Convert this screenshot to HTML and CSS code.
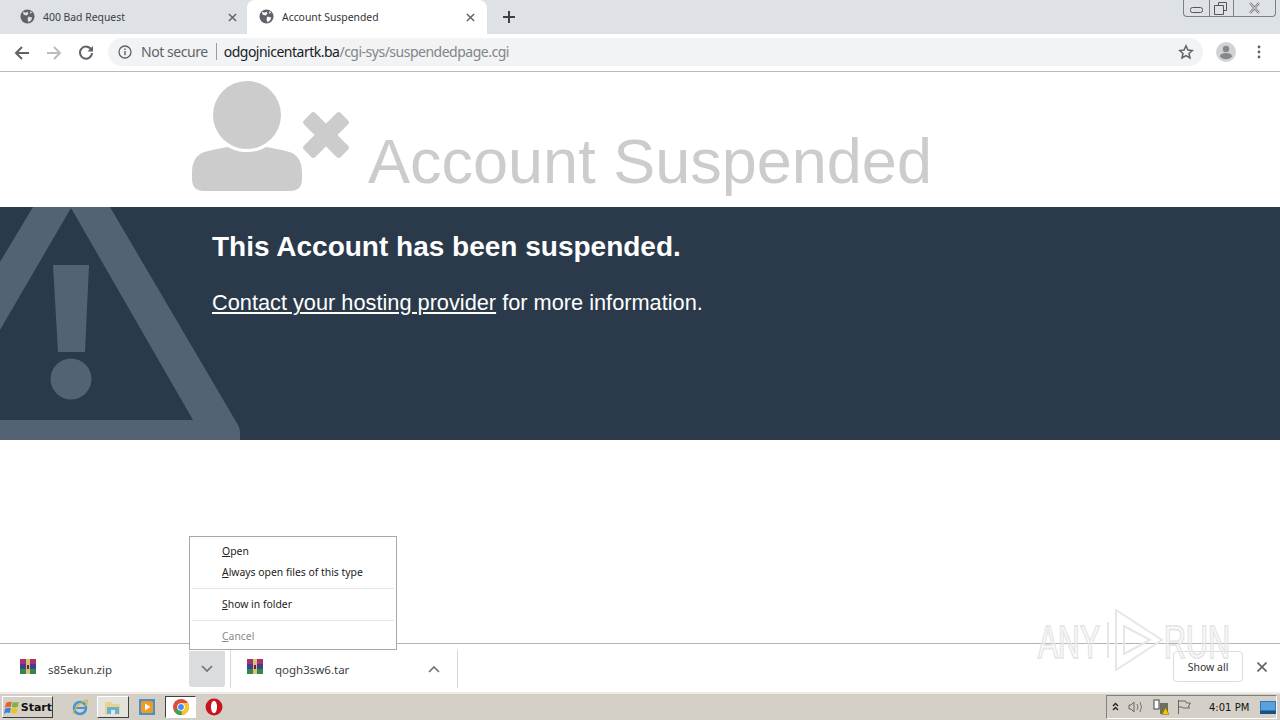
FILE: index.html
```html
<!DOCTYPE html>
<html lang="en">

<head>
    <meta charset="UTF-8">
    <title>Account Suspended</title>
    <link rel="stylesheet" href="styles.css">
</head>

<body>
    <div class="screen">
        <div class="tab-bar">
            <div class="tab">
                <svg class="globe" viewBox="0 0 16 16"><circle cx="8" cy="8" r="7.5" fill="#5f6368"/><path d="M3 3l3 1 2-1 1 2-2 2-3-1zM9 8l4 1-1 3-3 2-1-3zM11 2l2 2-2 1z" fill="#dee1e6"/></svg>
                <span class="tab-title">400 Bad Request</span>
                <svg class="tab-close" viewBox="0 0 10 10"><path d="M1 1l8 8M9 1l-8 8" stroke="#5f6368" stroke-width="1.6"/></svg>
            </div>
            <div class="tab tab-active">
                <svg class="globe" viewBox="0 0 16 16"><circle cx="8" cy="8" r="7.5" fill="#5f6368"/><path d="M3 3l3 1 2-1 1 2-2 2-3-1zM9 8l4 1-1 3-3 2-1-3zM11 2l2 2-2 1z" fill="#fff"/></svg>
                <span class="tab-title">Account Suspended</span>
                <svg class="tab-close" viewBox="0 0 10 10"><path d="M1 1l8 8M9 1l-8 8" stroke="#5f6368" stroke-width="1.6"/></svg>
            </div>
            <svg class="new-tab" viewBox="0 0 12 12"><path d="M6 0v12M0 6h12" stroke="#3c4043" stroke-width="2"/></svg>
            <div class="win-buttons">
                <div class="win-btn win-min"><svg width="13" height="6" viewBox="0 0 13 6"><rect x="0.5" y="0.5" width="12" height="5" rx="2" fill="none" stroke="#555"/></svg></div>
                <div class="win-btn win-max"><svg width="13" height="13" viewBox="0 0 13 13"><path d="M4.5 3V.5h8v8H10M.5 3.500h9v9h-9z" fill="none" stroke="#555"/></svg></div>
                <div class="win-btn win-x"><svg width="13" height="12" viewBox="0 0 13 12"><path d="M2 1l9 10M11 1L2 11" stroke="#777" stroke-width="2.4"/><path d="M2 1l9 10M11 1L2 11" stroke="#dee1e6" stroke-width="1"/></svg></div>
            </div>
        </div>

        <div class="toolbar">
            <svg class="nav-icon" viewBox="0 0 16 16"><path d="M15 8H2M8 2L2 8l6 6" fill="none" stroke="#5f6368" stroke-width="2"/></svg>
            <svg class="nav-icon" viewBox="0 0 16 16"><path d="M1 8h13M8 2l6 6-6 6" fill="none" stroke="#babcbe" stroke-width="2"/></svg>
            <svg class="nav-icon" viewBox="0 0 16 16"><path d="M13.500 5.200A6 6 0 1 0 14 8" fill="none" stroke="#5f6368" stroke-width="2"/><path d="M9.500 6.500H15V1z" fill="#5f6368"/></svg>
            <div class="omnibox">
                <svg class="info-icon" viewBox="0 0 14 14"><circle cx="7" cy="7" r="6" fill="none" stroke="#5f6368" stroke-width="1.3"/><path d="M7 6v4.200M7 3.400v1.500" stroke="#5f6368" stroke-width="1.4"/></svg>
                <span class="not-secure">Not secure</span>
                <span class="omni-sep"></span>
                <span class="url"><span class="url-host">odgojnicentartk.ba</span>/cgi-sys/suspendedpage.cgi</span>
                <svg class="star" viewBox="0 0 16 16"><path d="M8 1.800l1.900 4.200 4.500.5-3.400 3 1 4.500L8 11.600 4 14l1-4.500-3.400-3 4.500-.5z" fill="none" stroke="#5f6368" stroke-width="1.5"/></svg>
            </div>
            <svg class="avatar" viewBox="0 0 20 20"><circle cx="10" cy="10" r="10" fill="#d0d2d4"/><circle cx="10" cy="7" r="3.200" fill="#85888b"/><path d="M3.800 14.200c1-2.600 3.600-3.200 6.200-3.200s5.200.6 6.200 3.200c-1.500 2-3.700 3-6.200 3s-4.700-1-6.200-3z" fill="#85888b"/></svg>
            <svg class="menu-dots" viewBox="0 0 4 14"><circle cx="2" cy="2" r="1.400" fill="#5f6368"/><circle cx="2" cy="7" r="1.400" fill="#5f6368"/><circle cx="2" cy="12" r="1.400" fill="#5f6368"/></svg>
        </div>

        <div class="page">
            <div class="page-head">
                <svg class="user-x" viewBox="0 0 158 110">
                    <circle cx="55" cy="34" r="34" fill="#ccc"/>
                    <path d="M0 92c0-14 6-20 16-22 8-2 14-3 20-4 5 3 11 5 19 5s14-2 19-5c6 1 12 2 20 4 10 2 16 8 16 22v6c0 8-4 12-12 12H12c-8 0-12-4-12-12z" fill="#ccc"/>
                    <rect x="108" y="46" width="52" height="16" rx="3" fill="#ccc" transform="rotate(45 134 54)"/>
                    <rect x="108" y="46" width="52" height="16" rx="3" fill="#ccc" transform="rotate(-45 134 54)"/>
                </svg>
                <h1 class="suspended-title">Account Suspended</h1>
            </div>
            <div class="banner">
                <svg class="banner-warning" viewBox="0 0 240 233">
                    <path d="M33 0L0 55v68L71 1 193 213H0v20h240v-8q0-4-2-7L110 0z" fill="#546374"/>
                    <path d="M53 58h36l-4 87H58z" fill="#546374"/>
                    <circle cx="71" cy="172" r="20.500" fill="#546374"/>
                </svg>
                <div class="banner-text">
                    <h2>This Account has been suspended.</h2>
                    <p><a href="#">Contact your hosting provider</a> for more information.</p>
                </div>
            </div>
        </div>

        <div class="download-bar">
            <div class="download-item">
                <svg class="rar-icon" viewBox="0 0 16 16"><rect x="0" y="0" width="16" height="5" fill="#a8326a"/><rect x="0" y="5" width="16" height="5" fill="#3f3f96"/><rect x="0" y="10" width="16" height="5" fill="#2f8a4a"/><rect x="6" y="0" width="4" height="15" fill="#d8c27a"/><rect x="7" y="6" width="2" height="4" fill="#7a2020"/></svg>
                <span class="file-name">s85ekun.zip</span>
                <span class="chevron-box chevron-open"><svg width="12" height="8" viewBox="0 0 12 8"><path d="M1 1l5 5 5-5" fill="none" stroke="#70757a" stroke-width="1.700"/></svg></span>
            </div>
            <span class="download-sep"></span>
            <div class="download-item download-item-second">
                <svg class="rar-icon" viewBox="0 0 16 16"><rect x="0" y="0" width="16" height="5" fill="#a8326a"/><rect x="0" y="5" width="16" height="5" fill="#3f3f96"/><rect x="0" y="10" width="16" height="5" fill="#2f8a4a"/><rect x="6" y="0" width="4" height="15" fill="#d8c27a"/><rect x="7" y="6" width="2" height="4" fill="#7a2020"/></svg>
                <span class="file-name">qogh3sw6.tar</span>
                <span class="chevron-box"><svg width="12" height="8" viewBox="0 0 12 8"><path d="M1 7l5-5 5 5" fill="none" stroke="#70757a" stroke-width="1.700"/></svg></span>
            </div>
            <span class="download-sep"></span>
            <button class="show-all">Show all</button>
            <svg class="bar-close" viewBox="0 0 10 10"><path d="M.5.5l9 9M9.500.5l-9 9" stroke="#5f6368" stroke-width="1.600"/></svg>
        </div>

        <div class="taskbar">
            <div class="start-btn">
                <svg width="16" height="15" viewBox="0 0 16 15"><path d="M2 3q3-2 6-1L7 7Q4 6 1 8z" fill="#e8622a"/><path d="M9 2q3 1 6 0l-1 5q-3 1-6 0z" fill="#7cb442"/><path d="M1 9q3-2 6-1l-1 5q-3-1-6 1z" fill="#3b82d6"/><path d="M8 8q3 1 6 0l-1 5q-3 1-6 0z" fill="#f2c21c"/></svg>
                <span>Start</span>
            </div>
            <svg class="task-icon task-ie" viewBox="0 0 18 18"><circle cx="9" cy="10" r="6" fill="none" stroke="#3f97d8" stroke-width="2.500"/><path d="M3 10h12" stroke="#3f97d8" stroke-width="2"/><path d="M3 16C1 13 9 4 16 2c1 2-1 5-3 7" fill="none" stroke="#e0b030" stroke-width="1.200"/></svg>
            <div class="task-btn">
                <svg width="18" height="17" viewBox="0 0 18 17"><path d="M1 3h6l2 2h7v10H1z" fill="#e8d48a"/><path d="M3 8h12v7H3z" fill="#6fb0cf"/><path d="M7 15v-4h4v4z" fill="#d8ecf4"/></svg>
            </div>
            <svg class="task-icon task-wmp" viewBox="0 0 16 16"><rect width="16" height="16" fill="#4c90c8"/><rect x="2" y="2" width="12" height="12" rx="2" fill="#f29a1f"/><path d="M6 4.500v7l5.500-3.500z" fill="#fff"/></svg>
            <div class="task-btn task-btn-on">
                <svg width="16" height="16" viewBox="0 0 16 16"><circle cx="8" cy="8" r="8" fill="#dd4b3e"/><path d="M8 8L1 12a8 8 0 0 0 8 4z" fill="#3aa757"/><path d="M8 8l1 8a8 8 0 0 0 6-12H8z" fill="#f7c531"/><circle cx="8" cy="8" r="3.800" fill="#fff"/><circle cx="8" cy="8" r="2.900" fill="#4a8bf0"/></svg>
            </div>
            <svg class="task-icon task-opera" viewBox="0 0 16 16"><circle cx="8" cy="8" r="7.500" fill="#c8141c"/><ellipse cx="8" cy="8" rx="2.700" ry="5.500" fill="#fff"/></svg>
            <div class="tray">
                <svg width="7" height="10" viewBox="0 0 7 10"><path d="M1 4l2.500-2.500L6 4M1 8l2.500-2.500L6 8" fill="none" stroke="#222" stroke-width="1.400"/></svg>
                <svg class="tray-sound" width="16" height="14" viewBox="0 0 16 14"><path d="M1 5h2l3-3v10L3 9H1z" fill="none" stroke="#666"/><path d="M9 4q2 3 0 6M12 2q3 5 0 10" fill="none" stroke="#777"/></svg>
                <svg class="tray-net" width="16" height="16" viewBox="0 0 16 16"><rect x="1" y="1" width="5" height="9" fill="#fff" stroke="#444"/><rect x="7" y="4" width="8" height="11" fill="#6e6e5e"/><path d="M9 15.500l3.500-7 3.500 7z" fill="#f4c400" stroke="#8a6a00" stroke-width=".5"/></svg>
                <svg class="tray-flag" width="15" height="14" viewBox="0 0 15 14"><path d="M1.500 0v14M1.500 1h7l1 2h4l-2 3 1 2H6L5 7H1.500" fill="none" stroke="#666"/></svg>
                <span class="clock">4:01 PM</span>
                <svg class="tray-desktop" width="16" height="13" viewBox="0 0 16 13"><rect width="16" height="13" fill="#2f75b8"/><rect x="1" y="1" width="14" height="8" fill="#5aa0dc"/><rect y="10" width="16" height="3" fill="#1f4f80"/></svg>
            </div>
        </div>

        <div class="context-menu">
            <div class="menu-item"><u>O</u>pen</div>
            <div class="menu-item"><u>A</u>lways open files of this type</div>
            <div class="menu-line"></div>
            <div class="menu-item"><u>S</u>how in folder</div>
            <div class="menu-line"></div>
            <div class="menu-item menu-disabled"><u>C</u>ancel</div>
        </div>

        <svg class="watermark" viewBox="0 0 244 64">
            <text x="2" y="50" textLength="62" lengthAdjust="spacingAndGlyphs">ANY</text>
            <path d="M72 14v36M80 2v60l46-30zM88 18v28l26-14z"/>
            <text x="128" y="50" textLength="66" lengthAdjust="spacingAndGlyphs">RUN</text>
        </svg>
    </div>
</body>

</html>
```

FILE: styles.css
```css
body {
    margin: 0;
    font-family: "Liberation Sans", Arial, sans-serif;
    background-color: #fff;
}

.screen {
    position: relative;
    width: 1280px;
    height: 720px;
    overflow: hidden;
    display: flex;
    flex-direction: column;
}

/* browser chrome */
.tab-bar {
    height: 34px;
    flex: none;
    display: flex;
    align-items: stretch;
    padding-left: 8px;
    background-color: #dee1e6;
}

.tab {
    width: 239px;
    box-sizing: border-box;
    display: flex;
    align-items: center;
    padding: 0 10px 1px 12px;
    font-family: "Noto Sans", sans-serif;
    font-size: 10.4px;
    color: #3c4043;
}

.tab-active {
    background-color: #fff;
    border-radius: 8px 8px 0 0;
    width: 240px;
    padding-right: 12px;
    color: #333;
}

.globe {
    width: 15px;
    height: 15px;
    margin-right: 8px;
    flex: none;
}

.tab-title {
    flex: 1;
}

.tab-close {
    width: 9px;
    height: 9px;
    margin-top: 1px;
}

.new-tab {
    width: 12px;
    height: 12px;
    margin: 11px 0 0 16px;
}

.win-buttons {
    margin-left: auto;
    margin-right: 4px;
    width: 93px;
    height: 17px;
    box-sizing: border-box;
    display: flex;
    border: 1px solid #7a8088;
    border-top: none;
    border-radius: 0 0 4px 4px;
}

.win-btn {
    display: flex;
    align-items: center;
    justify-content: center;
    border-right: 1px solid #7a8088;
}

.win-min {
    width: 25px;
}

.win-min svg {
    margin-top: 4px;
}

.win-max {
    width: 24px;
    padding-right: 2px;
    box-sizing: border-box;
}

.win-x {
    flex: 1;
    border-right: none;
}

.toolbar {
    height: 38px;
    flex: none;
    box-sizing: border-box;
    display: flex;
    align-items: center;
    padding-left: 14px;
    background-color: #fff;
    border-bottom: 1px solid #b9b9b9;
}

.nav-icon {
    width: 16px;
    height: 16px;
    margin-right: 16px;
    flex: none;
}

.omnibox {
    width: 1095px;
    height: 28px;
    margin-left: -2px;
    margin-top: -2px;
    box-sizing: border-box;
    display: flex;
    align-items: center;
    padding: 0 9px 0 10px;
    border-radius: 14px;
    background-color: #f1f3f4;
    font-family: "Noto Sans", sans-serif;
    font-size: 14px;
}

.info-icon {
    width: 14px;
    height: 14px;
    margin-right: 9px;
}

.not-secure {
    color: #5f6368;
    letter-spacing: -0.45px;
}

.omni-sep {
    width: 1px;
    height: 17px;
    margin: 0 7px 0 8px;
    background-color: #9a9da1;
}

.url {
    color: #80868b;
    flex: 1;
    letter-spacing: -0.5px;
}

.url-host {
    color: #202124;
}

.star {
    width: 16px;
    height: 16px;
}

.avatar {
    width: 20px;
    height: 20px;
    margin: -2px 0 0 13px;
}

.menu-dots {
    width: 4px;
    height: 14px;
    margin: -2px 0 0 21px;
}

/* the suspended page */
.page {
    flex: 1;
    min-height: 0;
    background-color: #fff;
}

.page-head {
    height: 135px;
    box-sizing: border-box;
    display: flex;
    align-items: flex-start;
    padding: 9px 0 0 192px;
}

.user-x {
    width: 158px;
    height: 110px;
    flex: none;
}

.suspended-title {
    margin: 44px 0 0 18px;
    font-size: 63px;
    line-height: 72px;
    font-weight: normal;
    color: #ccc;
    white-space: nowrap;
}

.banner {
    position: relative;
    height: 233px;
    overflow: hidden;
    background-color: #2a3a4a;
    color: #fff;
}

.banner-warning {
    position: absolute;
    left: 0;
    top: 0;
    width: 240px;
    height: 233px;
}

.banner-text {
    position: relative;
    padding: 23px 0 0 212px;
}

.banner-text h2 {
    margin: 0;
    font-size: 28px;
    line-height: 34px;
}

.banner-text p {
    margin: 26px 0 0;
    font-size: 21.75px;
    line-height: 26px;
}

.banner-text a {
    color: #fff;
}

/* downloads shelf */
.download-bar {
    height: 49px;
    flex: none;
    box-sizing: border-box;
    display: flex;
    align-items: center;
    padding-top: 1px;
    border-top: 1px solid #b5b5b5;
    background-color: #fff;
    font-family: "Noto Sans", sans-serif;
    font-size: 11.5px;
    color: #3c4043;
}

.download-item {
    width: 225px;
    box-sizing: border-box;
    display: flex;
    align-items: center;
    padding-left: 20px;
}

.download-item-second {
    width: 221px;
    padding-left: 16px;
}

.rar-icon {
    width: 16px;
    height: 16px;
    margin-top: -4px;
    flex: none;
}

.file-name {
    flex: 1;
    margin: 1px 0 0 12px;
}

.chevron-box {
    width: 36px;
    height: 36px;
    display: flex;
    align-items: center;
    justify-content: center;
    border-radius: 0 0 3px 3px;
}

.chevron-open {
    background-color: #dbdcde;
}

.download-sep {
    width: 1px;
    height: 38px;
    margin-left: 5px;
    background-color: #d8d8d8;
}

.show-all {
    width: 70px;
    height: 31px;
    margin: 0 0 4px 715px;
    padding: 0;
    background-color: #fff;
    border: 1px solid #dadce0;
    border-radius: 4px;
    font-family: "Noto Sans", sans-serif;
    font-size: 10.5px;
    color: #333;
}

.bar-close {
    width: 10px;
    height: 10px;
    margin: 0 0 4px 14px;
}

/* windows taskbar */
.taskbar {
    height: 28px;
    flex: none;
    box-sizing: border-box;
    display: flex;
    align-items: center;
    padding: 0 3px 0 2px;
    background-color: #d4d0c8;
    border-top: 2px solid #efece6;
}

.start-btn {
    width: 51px;
    height: 22px;
    box-sizing: border-box;
    display: flex;
    align-items: center;
    gap: 1px;
    padding-left: 1px;
    border: 1px solid;
    border-color: #fff #404040 #404040 #fff;
    font-family: "DejaVu Sans", sans-serif;
    font-size: 11px;
    font-weight: bold;
    color: #111;
}

.task-icon {
    width: 18px;
    height: 18px;
    flex: none;
}

.task-ie {
    margin-left: 18px;
}

.task-btn {
    width: 32px;
    height: 22px;
    box-sizing: border-box;
    display: flex;
    align-items: center;
    justify-content: center;
    margin-left: 8px;
    border: 1px solid;
    border-color: #fff #404040 #404040 #fff;
    background-color: #e4e2dc;
}

.task-wmp {
    width: 16px;
    height: 16px;
    margin-left: 10px;
}

.task-btn-on {
    width: 31px;
    margin-left: 10px;
    background-color: #fff;
    border-color: #404040 #fff #fff #404040;
}

.task-opera {
    margin-left: 9px;
}

.tray {
    margin-left: auto;
    width: 171px;
    height: 24px;
    box-sizing: border-box;
    display: flex;
    align-items: center;
    padding-left: 5px;
    border: 1px solid;
    border-color: #808080 #fff #fff #808080;
    font-family: "DejaVu Sans", sans-serif;
    font-size: 10px;
    color: #111;
}

.tray-sound {
    margin-left: 9px;
}

.tray-net {
    margin-left: 9px;
}

.tray-flag {
    margin-left: 8px;
}

.clock {
    margin-left: 17px;
    flex: 1;
}

/* overlays */
.context-menu {
    position: absolute;
    left: 189px;
    top: 536px;
    width: 208px;
    height: 114px;
    box-sizing: border-box;
    padding: 4px 2px 0;
    background-color: #fff;
    border: 1px solid #a8a8a8;
    font-family: "Noto Sans", sans-serif;
    font-size: 10.4px;
    color: #222;
}

.menu-item {
    height: 21px;
    line-height: 21px;
    padding-left: 30px;
}

.menu-line {
    height: 1px;
    margin: 5px 0;
    background-color: #e6e6e6;
}

.menu-disabled {
    color: #8a8a8a;
}

.watermark {
    position: absolute;
    left: 1036px;
    top: 608px;
    width: 244px;
    height: 64px;
    font-family: "Liberation Sans", sans-serif;
    font-size: 46px;
    fill: none;
    stroke: #e6e6e6;
    stroke-width: 2;
    pointer-events: none;
}
```
